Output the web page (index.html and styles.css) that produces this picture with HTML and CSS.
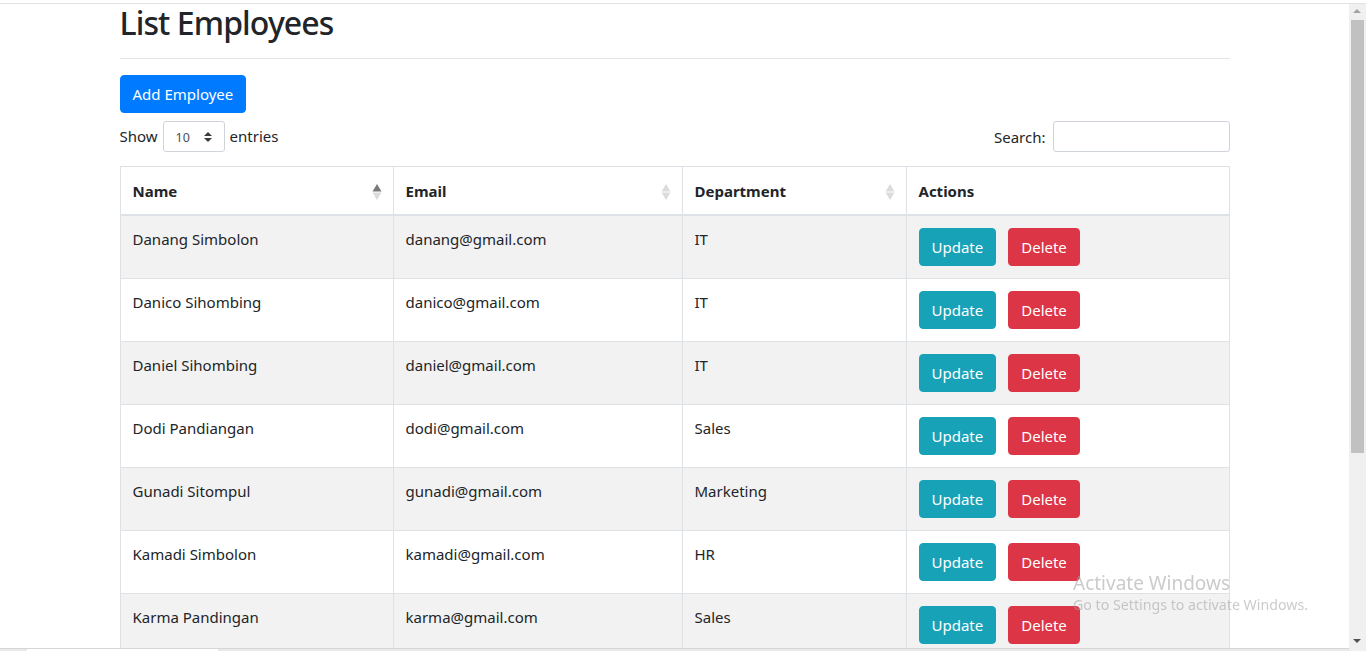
FILE: index.html
```html
<!DOCTYPE html>
<html lang="en">
<head>
<meta charset="utf-8">
<title>List Employees</title>
<link rel="stylesheet" href="styles.css">
</head>
<body>
<div class="chrome-top" aria-hidden="true"></div>
<div class="container">
  <h1 class="title">List Employees</h1>
  <hr class="divider">
  <button class="btn btn-primary add-btn" type="button">Add Employee</button>
  <div class="dt-top">
    <label class="dt-length">Show
      <span class="select-wrap">
        <select class="len-select">
          <option>10</option>
          <option>25</option>
          <option>50</option>
          <option>100</option>
        </select>
        <svg class="select-arrow" viewBox="0 0 4 5" width="8" height="10"><path d="M2 0L0 2h4zm0 5L0 3h4z" fill="#343a40"/></svg>
      </span>
      entries</label>
    <label class="dt-search">Search:<input type="search" class="search-input"></label>
  </div>
  <table class="table">
    <thead>
      <tr>
        <th class="col-name">Name<svg class="sort-icon" viewBox="0 0 10 18" width="10" height="18"><polygon points="5,1 9.5,8.5 0.5,8.5" fill="#7a7a7a"/><polygon points="0.5,9.5 9.5,9.5 5,17" fill="#dcdcdc"/></svg></th>
        <th class="col-email">Email<svg class="sort-icon" viewBox="0 0 10 18" width="10" height="18"><polygon points="5,1 9.5,8.5 0.5,8.5" fill="#dcdcdc"/><polygon points="0.5,9.5 9.5,9.5 5,17" fill="#dcdcdc"/></svg></th>
        <th class="col-dept">Department<svg class="sort-icon" viewBox="0 0 10 18" width="10" height="18"><polygon points="5,1 9.5,8.5 0.5,8.5" fill="#dcdcdc"/><polygon points="0.5,9.5 9.5,9.5 5,17" fill="#dcdcdc"/></svg></th>
        <th class="col-actions">Actions</th>
      </tr>
    </thead>
    <tbody>
      <tr>
        <td>Danang Simbolon</td><td>danang@gmail.com</td><td>IT</td>
        <td><div class="actions"><button class="btn btn-info" type="button">Update</button><button class="btn btn-danger" type="button">Delete</button></div></td>
      </tr>
      <tr>
        <td>Danico Sihombing</td><td>danico@gmail.com</td><td>IT</td>
        <td><div class="actions"><button class="btn btn-info" type="button">Update</button><button class="btn btn-danger" type="button">Delete</button></div></td>
      </tr>
      <tr>
        <td>Daniel Sihombing</td><td>daniel@gmail.com</td><td>IT</td>
        <td><div class="actions"><button class="btn btn-info" type="button">Update</button><button class="btn btn-danger" type="button">Delete</button></div></td>
      </tr>
      <tr>
        <td>Dodi Pandiangan</td><td>dodi@gmail.com</td><td>Sales</td>
        <td><div class="actions"><button class="btn btn-info" type="button">Update</button><button class="btn btn-danger" type="button">Delete</button></div></td>
      </tr>
      <tr>
        <td>Gunadi Sitompul</td><td>gunadi@gmail.com</td><td>Marketing</td>
        <td><div class="actions"><button class="btn btn-info" type="button">Update</button><button class="btn btn-danger" type="button">Delete</button></div></td>
      </tr>
      <tr>
        <td>Kamadi Simbolon</td><td>kamadi@gmail.com</td><td>HR</td>
        <td><div class="actions"><button class="btn btn-info" type="button">Update</button><button class="btn btn-danger" type="button">Delete</button></div></td>
      </tr>
      <tr>
        <td>Karma Pandingan</td><td>karma@gmail.com</td><td>Sales</td>
        <td><div class="actions"><button class="btn btn-info" type="button">Update</button><button class="btn btn-danger" type="button">Delete</button></div></td>
      </tr>
    </tbody>
  </table>
</div>
<div class="watermark" aria-hidden="true">
  <div class="wm-title">Activate Windows</div>
  <div class="wm-sub">Go to Settings to activate Windows.</div>
</div>
<div class="scrollbar" aria-hidden="true">
  <span class="sb-up"></span>
  <span class="sb-thumb"></span>
  <span class="sb-down"></span>
</div>
<div class="hbar" aria-hidden="true"><span class="hbar-tab"></span></div>
</body>
</html>
```
FILE: styles.css
```css
* { box-sizing: border-box; }

html { overflow: hidden; }

body {
  margin: 0;
  padding-right: 17px;
  font-family: "Noto Sans", "Liberation Sans", sans-serif;
  font-size: 15px;
  line-height: 24px;
  color: #212529;
  background: #fff;
}

.chrome-top {
  position: fixed;
  top: 0;
  left: 0;
  right: 0;
  height: 4px;
  background: #fff;
  border-bottom: 1px solid #e2e2e2;
  z-index: 5;
}

.container {
  width: 1140px;
  margin: 0 auto;
  padding: 0 15px;
}

.title {
  margin: 4px 0 0;
  font-size: 32px;
  font-weight: 500;
  line-height: 38px;
  letter-spacing: -0.9px;
}

.divider {
  margin: 16px 0 16px;
  height: 0;
  border: 0;
  border-top: 1px solid rgba(0, 0, 0, .1);
}

.btn {
  display: inline-block;
  font-family: inherit;
  font-size: 15px;
  line-height: 24px;
  color: #fff;
  padding: 6px 12px;
  border: 1px solid transparent;
  border-radius: 4px;
  cursor: pointer;
}

.btn-primary { background: #007bff; border-color: #007bff; }
.btn-info { background: #17a2b8; border-color: #17a2b8; }
.btn-danger { background: #dc3545; border-color: #dc3545; }

.add-btn {
  display: block;
  margin-bottom: 8px;
}

.dt-top {
  display: flex;
  justify-content: space-between;
  align-items: center;
  height: 31px;
}

.dt-length,
.dt-search {
  display: flex;
  align-items: center;
  font-weight: 400;
}

.dt-length { margin-top: -2px; }

.select-wrap {
  position: relative;
  display: inline-block;
  margin: 2px 5px 0;
  height: 31px;
}

.len-select {
  -webkit-appearance: none;
  appearance: none;
  width: 62px;
  height: 31px;
  padding: 2px 24px 0 12px;
  font-family: inherit;
  font-size: 12.5px;
  color: #495057;
  background: #fff;
  border: 1px solid #ced4da;
  border-radius: 3px;
}

.select-arrow {
  position: absolute;
  right: 13px;
  top: 11px;
  pointer-events: none;
}

.search-input {
  width: 177px;
  height: 31px;
  margin-left: 7px;
  padding: 4px 8px;
  font-family: inherit;
  font-size: 14px;
  border: 1px solid #ced4da;
  border-radius: 3px;
}

.table {
  width: 100%;
  margin-top: 14px;
  border-collapse: collapse;
  table-layout: fixed;
  border: 1px solid #dee2e6;
}

.table th,
.table td {
  border: 1px solid #dee2e6;
  text-align: left;
}

.table th {
  position: relative;
  padding: 12px 30px 11px 12px;
  font-weight: 700;
  vertical-align: bottom;
  border-bottom-width: 2px;
}

.table td {
  padding: 11px 12px 13px;
  vertical-align: top;
}

.table td .actions { margin-top: 1px; margin-bottom: -1px; }

.table tbody tr:nth-child(odd) { background: #f2f2f2; }

.col-name { width: 273px; }
.col-email { width: 289px; }
.col-dept { width: 224px; }

.sort-icon {
  position: absolute;
  right: 11px;
  top: 16px;
}

.actions {
  display: flex;
  gap: 12px;
}

.watermark {
  position: fixed;
  left: 1073px;
  top: 570px;
  color: rgba(160, 160, 160, .55);
  pointer-events: none;
  white-space: nowrap;
}

.wm-title {
  font-size: 19px;
  line-height: 26px;
}

.wm-sub {
  font-size: 14.2px;
  line-height: 18px;
}

.scrollbar {
  position: fixed;
  top: 4px;
  right: 0;
  bottom: 0;
  width: 17px;
  background: #f0f0f0;
}

.sb-up,
.sb-down {
  position: absolute;
  left: 4px;
  width: 0;
  height: 0;
  border-left: 4px solid transparent;
  border-right: 4px solid transparent;
}

.sb-up {
  top: 5px;
  border-bottom: 4px solid #a3a3a3;
}

.sb-down {
  bottom: 8px;
  border-top: 4px solid #505050;
}

.sb-thumb {
  position: absolute;
  top: 16px;
  left: 2px;
  width: 13px;
  height: 433px;
  background: #c1c1c1;
}

.hbar {
  position: fixed;
  left: 0;
  right: 17px;
  bottom: 0;
  height: 3px;
  background: #e9e9e9;
  border-top: 1px solid #d6d6d6;
}

.hbar-tab {
  position: absolute;
  left: 27px;
  top: 0;
  width: 191px;
  height: 2px;
  background: #fff;
}
```
